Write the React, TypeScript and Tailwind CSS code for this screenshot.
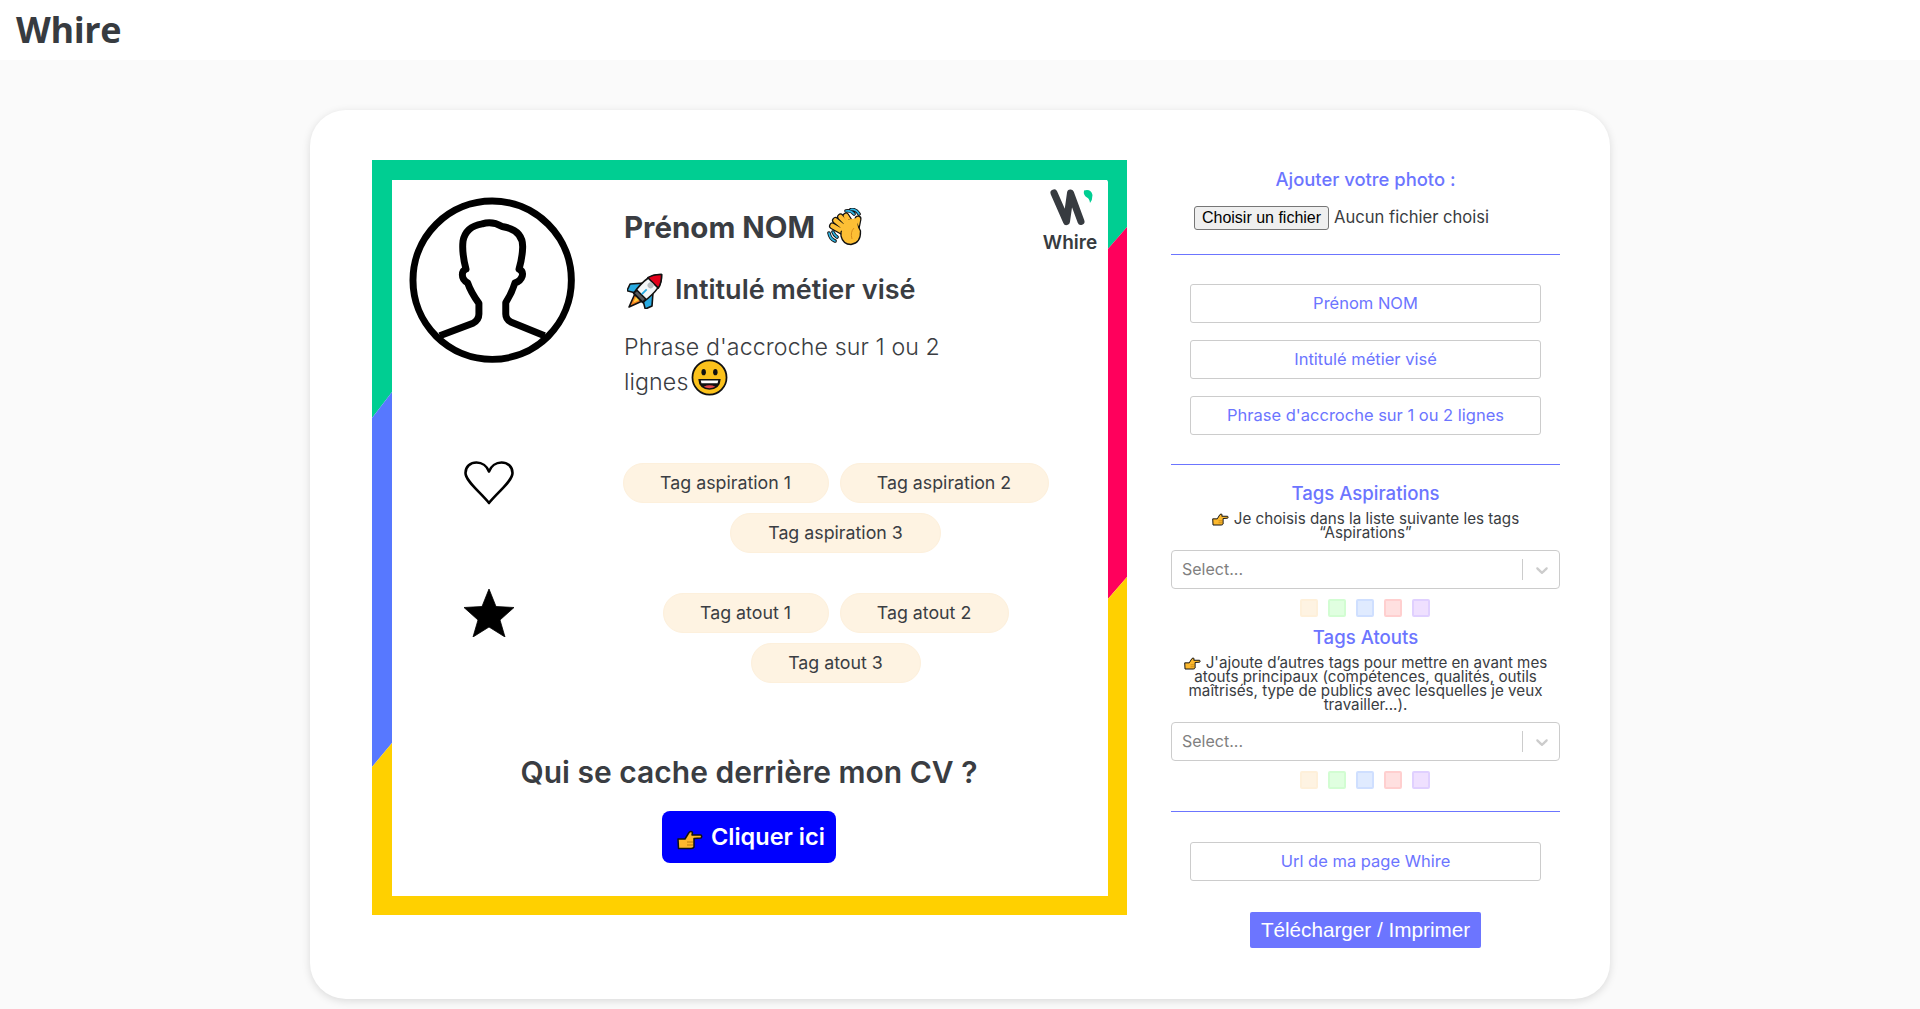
import React from "react";

const Pointing = ({ className }: { className?: string }) => (
  <svg viewBox="0 0 26 20" className={className}>
    <path d="M1 9 L8 9 L12 2.5 Q14 .5 15.5 2.5 L15 5 L24 5 Q25.5 6.5 24 8 L17 8.5 L17 17 Q16 18.5 14 18.5 L1.5 18.5 Z" fill="#fdb92e" stroke="#111" strokeWidth="1.5" strokeLinejoin="round" />
    <path d="M10 12 H16 M10 15 H16" stroke="#b97c10" strokeWidth="1" />
  </svg>
);

const Wave = () => (
  <svg viewBox="0 0 36 38" className="w-[36px] h-[38px]">
    <g fill="none" strokeLinecap="round">
      <path d="M19 3 Q24 2 27 6 M24 1.5 Q29 1 32 6" stroke="#111" strokeWidth="3.6" />
      <path d="M19 3 Q24 2 27 6 M24 1.5 Q29 1 32 6" stroke="#2fb6e6" strokeWidth="1.7" />
      <path d="M2 25 Q3 31 8 33 M6 24 Q7 27 10 29" stroke="#111" strokeWidth="3.6" />
      <path d="M2 25 Q3 31 8 33 M6 24 Q7 27 10 29" stroke="#2fb6e6" strokeWidth="1.7" />
      <g stroke="#111" strokeWidth="7">
        <path d="M18 25 L5.5 18" />
        <path d="M19 21 L8.5 12.5" />
        <path d="M22 18 L13.5 9" />
        <path d="M24 16 L19 8" />
        <path d="M29 21 L31 11" />
      </g>
      <g stroke="#fdbf35" strokeWidth="4.6">
        <path d="M18 25 L5.5 18" />
        <path d="M19 21 L8.5 12.5" />
        <path d="M22 18 L13.5 9" />
        <path d="M24 16 L19 8" />
        <path d="M29 21 L31 11" />
      </g>
    </g>
    <path d="M14 24 L22 12 L29 14 L33.5 23 Q34 35 24 36.5 Q16 36.5 14 28 Z" fill="#fdbf35" stroke="#111" strokeWidth="1.3" />
    <path d="M13 20 L20 12 L30 10 L31 22 L17 27 Z" fill="#fdbf35" />
    <path d="M27 20 Q23 24 25 31" stroke="#d98f1c" strokeWidth="1" fill="none" />
  </svg>
);

const Rocket = () => (
  <svg viewBox="0 0 38 38" className="w-[38px] h-[38px]">
    <g transform="rotate(45 19 19)" stroke="#111" strokeWidth="1.6" strokeLinejoin="round">
      <path d="M14 30 H24 L19 43 Z" fill="#f58220" />
      <path d="M16.5 30 H21.5 L19 37 Z" fill="#ffd23c" stroke="none" />
      <path d="M13 15 L3.5 26 L6 33 L13 29 Z" fill="#29abe2" />
      <path d="M25 15 L34.5 26 L32 33 L25 29 Z" fill="#29abe2" />
      <path d="M19 -3 C26.5 4 28 13 25.5 30 H12.5 C10 13 11.5 4 19 -3 Z" fill="#f4f7f9" />
      <path d="M19 -3 C23 .8 25.5 4.5 26.4 9 H11.6 C12.5 4.5 15 .8 19 -3 Z" fill="#e3001b" />
      <path d="M12.8 25.5 H25.2 L25.5 30 H12.5 Z" fill="#55585c" />
      <circle cx="19" cy="12.5" r="3" fill="#b8bcc0" stroke="none" />
      <path d="M19 18 V25" stroke="#29abe2" strokeWidth="1.8" />
    </g>
  </svg>
);

const Grin = () => (
  <svg viewBox="0 0 38 38" className="inline-block w-[37px] h-[37px] align-[-6px] -mt-[12px] ml-[3px]">
    <circle cx="19" cy="19" r="17.5" fill="#fcc21b" stroke="#111" strokeWidth="1.8" />
    <ellipse cx="13" cy="13.5" rx="2.3" ry="3.2" fill="#111" />
    <ellipse cx="25" cy="13.5" rx="2.3" ry="3.2" fill="#111" />
    <path d="M7.5 20.5 H30.5 Q30 31 19 31.5 Q8 31 7.5 20.5 Z" fill="#111" />
    <path d="M10 22 H28 L27.3 25 H10.7 Z" fill="#fff" />
    <path d="M13 28.5 Q19 25.5 25 28.5 Q19 31.5 13 28.5 Z" fill="#e5484d" />
  </svg>
);

const Avatar = () => (
  <svg viewBox="145 137 504 504" className="w-[167px] h-[167px] shrink-0">
    <circle cx="396" cy="388" r="239" fill="none" stroke="#000" strokeWidth="21" />
    <path
      d="M238 556 L338 518 Q356 508 356 490 L356 458 Q332 425 322 396 Q306 388 306 372 Q306 358 317 355 Q304 305 308 270 Q316 226 366 218 Q396 208 426 226 Q490 236 488 290 Q487 320 477 355 Q490 360 487 375 Q482 391 465 396 Q455 428 437 456 L437 490 Q437 506 452 514 L554 556"
      fill="none"
      stroke="#000"
      strokeWidth="21"
      strokeLinejoin="round"
    />
  </svg>
);

const Heart = () => (
  <svg viewBox="0 0 50 44" className="w-[50px] h-[44px] -mt-[2px]">
    <path d="M25 42 C16 31 1.5 20 1.5 12 C1.5 5.5 6.5 1.5 12.5 1.5 C18 1.5 23 5 25 10.5 C27 5 32 1.5 37.5 1.5 C43.5 1.5 48.5 5.5 48.5 12 C48.5 20 34 31 25 42 Z" fill="none" stroke="#000" strokeWidth="2.6" strokeLinejoin="round" />
  </svg>
);

const Star = () => (
  <svg viewBox="0 0 50 48" className="w-[50px] h-[48px] -mt-[4px]">
    <path d="M25 0 L32 17.5 L50 18.5 L36 31 L41 48 L25 38 L9 48 L14 31 L0 18.5 L18 17.5 Z" fill="#000" stroke="#000" strokeWidth="0.8" strokeLinejoin="round" />
  </svg>
);

const Tag = ({ label, w }: { label: string; w: string }) => (
  <div className={`h-10 ${w} rounded-[20px] bg-[#fef3e2] border border-[#fdf0dc] flex items-center justify-center text-[17.8px] text-[#3a3d42]`}>{label}</div>
);

const Chevron = () => (
  <svg viewBox="0 0 20 20" className="w-5 h-5 fill-[#cccccc]">
    <path d="M4.516 7.548c0.436-0.446 1.043-0.481 1.576 0l3.908 3.747 3.908-3.747c0.533-0.481 1.141-0.446 1.574 0 0.436 0.445 0.408 1.197 0 1.615-0.406 0.418-4.695 4.502-4.695 4.502-0.217 0.223-0.502 0.335-0.787 0.335s-0.57-0.112-0.789-0.335c0 0-4.287-4.084-4.695-4.502s-0.436-1.17 0-1.615z" />
  </svg>
);

const SelectBox = () => (
  <div className="mt-[10px] h-[39px] border border-[#cccccc] rounded-[4px] flex items-center pl-[10px] pr-[6px] bg-white">
    <span className="flex-1 text-[16px] text-[#808080] pb-[2px]">Select...</span>
    <span className="w-px h-[21px] bg-[#cccccc]" />
    <span className="ml-[9px] mr-px"><Chevron /></span>
  </div>
);

const Swatches = () => (
  <div className="mt-[10px] flex justify-center gap-[10px] pr-[2px]">
    <span className="w-[18px] h-[18px] rounded-[2px] bg-[#fef3e2] border-2 border-[#fef0da]" />
    <span className="w-[18px] h-[18px] rounded-[2px] bg-[#e0ffe0] border-2 border-[#d2fdd2]" />
    <span className="w-[18px] h-[18px] rounded-[2px] bg-[#e0ebff] border-2 border-[#cfdfff]" />
    <span className="w-[18px] h-[18px] rounded-[2px] bg-[#ffe0e0] border-2 border-[#ffcfcf]" />
    <span className="w-[18px] h-[18px] rounded-[2px] bg-[#efe0ff] border-2 border-[#e0d0ff]" />
  </div>
);

const Field = ({ text, cls }: { text: string; cls: string }) => (
  <input
    readOnly
    placeholder={text}
    className={`block w-[351px] h-[39px] ml-[19px] ${cls} border border-[#cccccc] rounded-[3px] text-center text-[16.5px] pb-[2px] bg-white outline-none placeholder:text-[#6c75ff] placeholder:opacity-100`}
  />
);

export default function App() {
  return (
    <div className="min-h-[1009px] bg-[#fafafa] text-[#3a3d42] font-['Inter','Liberation_Sans',sans-serif]">
      <header className="h-[60px] bg-white flex items-center pl-[16px]">
        <span className="font-['Open_Sans',sans-serif] font-bold text-[36px] leading-none tracking-[-0.4px] text-[#373b40]">Whire</span>
      </header>

      <main className="flex justify-center pt-[50px] pb-[10px]">
        <div className="w-[1300px] h-[889px] bg-white rounded-[36px] shadow-[0_2px_8px_rgba(0,0,0,0.13)] pl-[62px] pt-[50px] flex">
          {/* CV */}
          <div className="relative w-[755px] h-[755px] shrink-0 pl-5 pt-5 pr-[19px] pb-[19px]">
            <svg viewBox="0 0 755 755" className="absolute inset-0 w-full h-full">
              <polygon points="0,0 755,0 755,67 735,90 735,20 20,20 20,232 0,258" fill="#00ce92" />
              <polygon points="0,258 20,232 20,583 0,607" fill="#5778ff" />
              <polygon points="755,67 755,417 735,440 735,90" fill="#ff005c" />
              <polygon points="0,607 20,583 20,735 735,735 735,440 755,417 755,755 0,755" fill="#ffd000" />
            </svg>

            <div className="relative h-full bg-white rounded-tr-[2px] flex flex-col">
              {/* top-right logo */}
              <div className="absolute top-[7px] left-[651px] w-[54px] flex flex-col items-center">
                <svg viewBox="1045 187 50 40" className="w-[50px] h-[40px]">
                  <path d="M1054 193 L1066.5 221.5 L1070.5 193 L1081 221.5" fill="none" stroke="#373b40" strokeWidth="7" strokeLinecap="round" strokeLinejoin="round" />
                  <path d="M1084 190.5 Q1091 188.5 1092.5 195 Q1092.5 200 1090 203 Q1089.5 198.5 1087 197.5 Q1083 195 1084 190.5 Z" fill="#00ce92" />
                </svg>
                <span className="font-semibold text-[19px] leading-[22px] text-[#373b40] mt-[5px] whitespace-nowrap">Whire</span>
              </div>

              <div className="flex h-[220px] shrink-0">
                <div className="ml-[17px] mt-[17px]"><Avatar /></div>
                <div className="ml-[48px] pt-[29px]">
                  <div className="flex items-center h-9">
                    <span className="font-bold text-[29.5px] leading-9">Prénom NOM</span>
                    <span className="ml-[12px]"><Wave /></span>
                  </div>
                  <div className="flex items-center h-9 mt-[27px]">
                    <span className="ml-[3px]"><Rocket /></span>
                    <span className="ml-[10px] font-semibold text-[27px] leading-9">Intitulé métier visé</span>
                  </div>
                  <p className="mt-[22px] text-[23.2px] leading-[35px] font-light tracking-[0.1px]">
                    Phrase d'accroche sur 1 ou 2<br />lignes<Grin />
                  </p>
                </div>
              </div>

              <div className="mt-[63px] flex pl-[72px] items-start">
                <Heart />
                <div className="ml-[96px] w-[451px] flex flex-wrap justify-center gap-x-[11px] gap-y-[10px]">
                  <Tag label="Tag aspiration 1" w="w-[206px]" />
                  <Tag label="Tag aspiration 2" w="w-[209px]" />
                  <Tag label="Tag aspiration 3" w="w-[211px]" />
                </div>
              </div>

              <div className="mt-[40px] flex pl-[72px] items-start">
                <Star />
                <div className="ml-[96px] w-[451px] flex flex-wrap justify-center gap-x-[11px] gap-y-[10px]">
                  <Tag label="Tag atout 1" w="w-[166px]" />
                  <Tag label="Tag atout 2" w="w-[169px]" />
                  <Tag label="Tag atout 3" w="w-[170px]" />
                </div>
              </div>

              <h2 className="mt-[69px] h-10 pr-[2px] text-center text-[30px] leading-10 font-semibold whitespace-nowrap">Qui se cache derrière mon CV ?</h2>

              <div className="mt-[19px] ml-[270px] w-[174px] h-[52px] bg-[#0000ff] rounded-[8px] flex items-center pl-[15px] text-white">
                <Pointing className="w-[26px] h-[20px] mt-[6px]" />
                <span className="ml-[8px] font-semibold text-[23.5px] leading-none whitespace-nowrap">Cliquer ici</span>
              </div>
            </div>
          </div>

          {/* Right panel */}
          <div className="ml-[44px] w-[389px] shrink-0 pt-[6px]">
            <div className="h-7 text-center text-[18.4px] leading-7 font-medium text-[#6c75ff] -translate-y-px">Ajouter votre photo :</div>
            <div className="mt-[12px] h-6 pl-[23px] flex items-center text-[16.6px]">
              <span className="w-[135px] h-6 bg-[#efefef] border border-[#767676] rounded-[3px] font-['Liberation_Sans',sans-serif] text-[16px] text-black flex items-center justify-center">Choisir un fichier</span>
              <span className="ml-[5px] pb-px">Aucun fichier choisi</span>
            </div>
            <div className="mt-[24px] h-px bg-[#6c75ff]" />

            <div className="mt-[29px]"><Field text="Prénom NOM" cls="" /></div>
            <Field text="Intitulé métier visé" cls="mt-[17px]" />
            <Field text="Phrase d'accroche sur 1 ou 2 lignes" cls="mt-[17px]" />
            <div className="mt-[29px] h-px bg-[#6c75ff]" />

            <div className="mt-[14px] h-7 text-center text-[18.6px] leading-7 font-medium text-[#6c75ff]">Tags Aspirations</div>
            <p className="mt-[5px] text-center text-[15.2px] leading-[14px]">
              <Pointing className="inline-block w-[17px] h-[13px] align-[-2px] mr-[5px]" />
              Je choisis dans la liste suivante les tags<br />“Aspirations”
            </p>
            <SelectBox />
            <Swatches />

            <div className="mt-[6px] h-7 text-center text-[18.6px] leading-7 font-medium text-[#6c75ff]">Tags Atouts</div>
            <p className="mt-[5px] text-center text-[15.2px] leading-[14px]">
              <Pointing className="inline-block w-[17px] h-[13px] align-[-2px] mr-[5px]" />
              J'ajoute d’autres tags pour mettre en avant mes<br />atouts principaux (compétences, qualités, outils<br />maîtrisés, type de publics avec lesquelles je veux<br />travailler...).
            </p>
            <SelectBox />
            <Swatches />
            <div className="mt-[22px] h-px bg-[#6c75ff]" />

            <div className="mt-[30px]"><Field text="Url de ma page Whire" cls="" /></div>

            <div className="mt-[31px] mx-auto w-[231px] h-9 bg-[#6c75ff] rounded-[2px] flex items-center justify-center font-['Liberation_Sans',sans-serif] text-[20.7px] text-white whitespace-nowrap">Télécharger / Imprimer</div>
          </div>
        </div>
      </main>
    </div>
  );
}
